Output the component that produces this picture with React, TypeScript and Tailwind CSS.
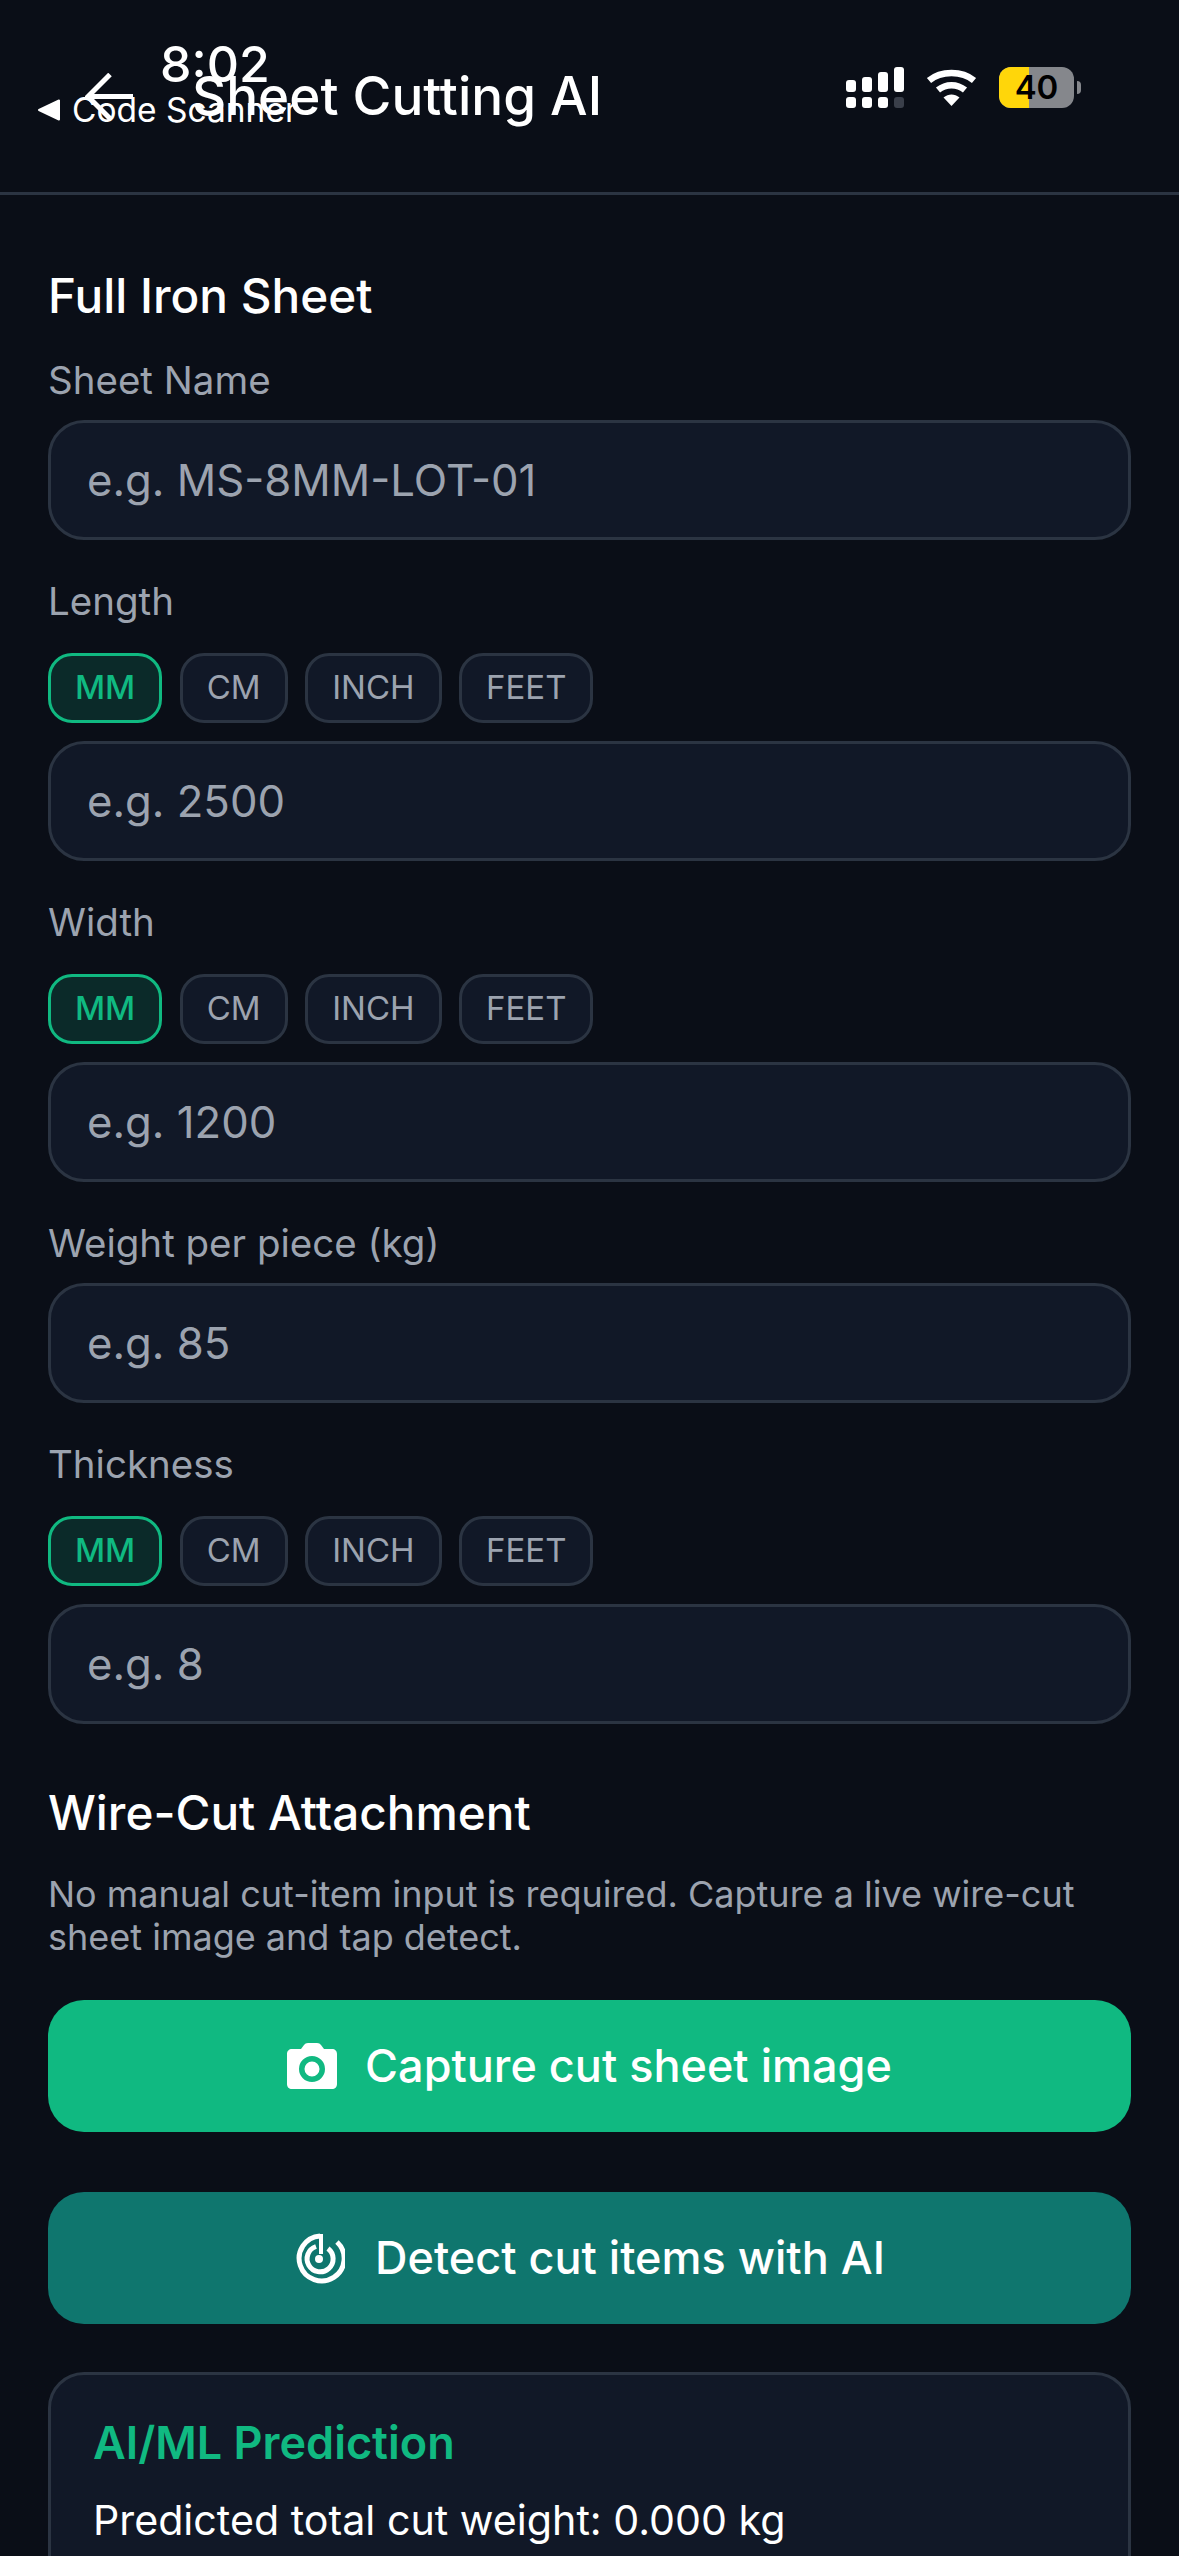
const UNITS = ["MM", "CM", "INCH", "FEET"];

function StatusOverlay() {
  return (
    <div className="absolute inset-0 text-white">
      <span className="absolute left-[160px] top-[36px] text-[50px] leading-[56px] font-medium">8:02</span>
      <svg className="absolute left-[37px] top-[99px]" width="24" height="22" viewBox="0 0 24 22">
        <path d="M22 1.5v19L2 11z" fill="#fff" stroke="#fff" strokeWidth="2" strokeLinejoin="round" />
      </svg>
      <span className="absolute left-[72px] top-[90px] text-[33.500px] leading-[40px]">Code Scanner</span>
      <svg className="absolute left-[846px] top-[67px]" width="58" height="41" viewBox="0 0 58 41">
        <rect x="0" y="13" width="10" height="12" rx="3" fill="#fff" />
        <rect x="16" y="10" width="10" height="15" rx="3" fill="#fff" />
        <rect x="32" y="5" width="10" height="20" rx="3" fill="#fff" />
        <rect x="48" y="0" width="10" height="25" rx="3" fill="#fff" />
        <rect x="0" y="30" width="10" height="11" rx="3" fill="#fff" />
        <rect x="16" y="30" width="10" height="11" rx="3" fill="#fff" />
        <rect x="32" y="30" width="10" height="11" rx="3" fill="#fff" />
        <rect x="48" y="30" width="10" height="11" rx="3" fill="#3a3f4a" />
      </svg>
      <svg className="absolute left-[926px] top-[69px]" width="51" height="37" viewBox="0 0 51 37" fill="none">
        <path d="M3 11.5C15 1.5 36 1.5 48 11.5" stroke="#fff" strokeWidth="6.5" />
        <path d="M12 21c8-6.5 19-6.5 27 0" stroke="#fff" strokeWidth="6.5" />
        <path d="M17.5 28.5c5-4 11-4 16 0L25.5 37z" fill="#fff" />
      </svg>
      <div className="absolute left-[999px] top-[67px] w-[75px] h-[41px] rounded-[12px] overflow-hidden flex bg-[#85878c]">
        <div className="w-[30px] bg-[#ffd60a]" />
      </div>
      <span className="absolute left-[999px] top-[67px] w-[75px] text-center text-black text-[33px] leading-[41px] font-semibold">40</span>
      <div className="absolute left-[1077px] top-[81px] w-[4px] h-[13px] rounded-r-full bg-[#85878c]" />
    </div>
  );
}

function UnitChips() {
  return (
    <div className="flex gap-[17.500px] mt-[28px] mb-[18px]">
      {UNITS.map((u, i) => (
        <div
          key={u}
          className={
            i === 0
              ? "h-[70px] px-[24px] flex items-center rounded-[24px] border-[3px] border-[#10b981] bg-[#0b2a29] text-[#10b981] text-[33px] font-medium"
              : "h-[70px] px-[24px] flex items-center rounded-[24px] border-[3px] border-[#2b3442] bg-[#111827] text-[#9ca3af] text-[33px]"
          }
        >
          {u}
        </div>
      ))}
    </div>
  );
}

function Field({ label, placeholder, units }: { label: string; placeholder: string; units?: boolean }) {
  return (
    <div className="mb-[37px]">
      <div className="text-[38.500px] leading-[48px] text-[#9ca3af]">{label}</div>
      {units ? <UnitChips /> : <div className="h-[16px]" />}
      <input
        readOnly
        placeholder={placeholder}
        className="block w-full h-[120px] px-[36px] rounded-[36px] border-[3px] border-[#2b3442] bg-[#111827] text-[43.700px] text-white placeholder:text-[#9ca3af] outline-none"
      />
    </div>
  );
}

export default function App() {
  return (
    <div className="relative h-[2556px] overflow-hidden bg-[#0a0e17] font-['Inter',sans-serif]">
      {/* Header */}
      <div className="h-[195px] border-b-[3px] border-[#2b3442] flex items-start pl-[85px] pt-[62px] gap-[59px]">
        <svg className="mt-[11px]" width="48" height="47" viewBox="0 0 48 47" fill="none" stroke="#fff" strokeWidth="5">
          <path d="M48 23.5H3M25 1.5L3 23.5l22 22" />
        </svg>
        <span className="text-[53px] leading-[68px] font-medium text-white">Sheet Cutting AI</span>
      </div>

      <div className="px-[48px] pt-[71px]">
        <div className="text-[47.700px] leading-[60px] font-medium text-white mb-[30px]">Full Iron Sheet</div>
        <Field label="Sheet Name" placeholder="e.g. MS-8MM-LOT-01" />
        <Field label="Length" placeholder="e.g. 2500" units />
        <Field label="Width" placeholder="e.g. 1200" units />
        <Field label="Weight per piece (kg)" placeholder="e.g. 85" />
        <Field label="Thickness" placeholder="e.g. 8" units />

        <div className="text-[47.700px] leading-[60px] font-medium text-white mt-[59px] mb-[30px]">Wire-Cut Attachment</div>
        <p className="text-[36px] leading-[43px] text-[#9ca3af] mb-[41px]">
          No manual cut-item input is required. Capture a live wire-cut sheet image and tap detect.
        </p>

        <div className="h-[132px] rounded-[36px] bg-[#10b981] flex items-center justify-center gap-[28px] text-white text-[45px] font-medium mb-[60px]">
          <svg width="50" height="46" viewBox="0 0 50 46">
            <path
              fillRule="evenodd"
              fill="#fff"
              d="M5 6h9l3-4c1-1.300 2-2 4-2h9c2 0 3 .7 4 2l3 4h8c3 0 5 2 5 5v30c0 3-2 5-5 5H5c-3 0-5-2-5-5V11c0-3 2-5 5-5zm20 7a13 13 0 1 0 0 26 13 13 0 0 0 0-26zm0 5.500a7.500 7.500 0 1 1 0 15 7.500 7.500 0 0 1 0-15z"
            />
          </svg>
          Capture cut sheet image
        </div>

        <div className="h-[132px] rounded-[36px] bg-[#0f766e] flex items-center justify-center gap-[30px] text-white text-[45px] font-medium mb-[48px]">
          <svg width="51" height="51" viewBox="0 0 51 51" fill="none" stroke="#fff" strokeWidth="5">
            <path d="M26 3a22.500 22.500 0 1 0 17 6" />
            <path d="M22 13.500a13 13 0 1 0 12 2" />
            <path d="M27 1v20" strokeWidth="4" />
            <circle cx="25" cy="26" r="4" fill="#fff" stroke="none" />
          </svg>
          Detect cut items with AI
        </div>

        <div className="rounded-[36px] border-[3px] border-[#2b3442] bg-[#111827] px-[42px] pt-[38px] pb-[48px]">
          <div className="text-[45px] leading-[60px] font-semibold text-[#10b981] mb-[17px]">AI/ML Prediction</div>
          <div className="text-[41.200px] leading-[60px] text-white">Predicted total cut weight: 0.000 kg</div>
        </div>
      </div>

      <StatusOverlay />
    </div>
  );
}
